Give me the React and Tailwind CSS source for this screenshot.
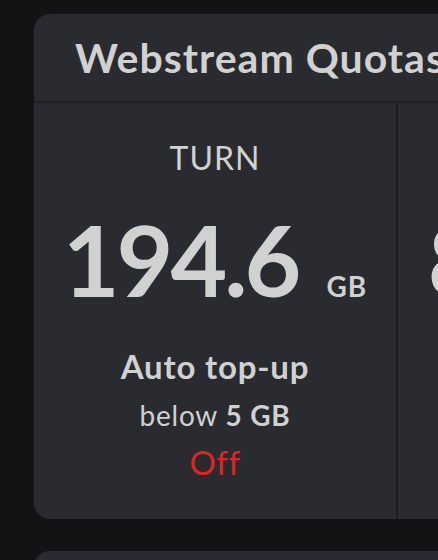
export default function App() {
  const quotas = [
    { label: 'TURN', value: '194.6', unit: 'GB', threshold: '5 GB', auto: false },
    { label: 'STUN', value: '812.4', unit: 'GB', threshold: '5 GB', auto: false },
  ];

  return (
    <div className="min-h-[560px] w-[438px] overflow-hidden bg-[#121315] pl-[34px] pt-[14px] font-['Lato',sans-serif] text-[#d1d1d1]">
      <div className="w-[760px] rounded-2xl bg-[#2a2b30]">
        {/* Header */}
        <div className="flex h-[89px] items-center border-b-2 border-[#1e1f22] pl-[41px]">
          <h1 className="whitespace-nowrap text-[41px] font-bold leading-none tracking-[1px]">Webstream Quotas</h1>
        </div>

        {/* Quota columns */}
        <div className="flex">
          {quotas.map((q, i) => (
            <div
              key={q.label}
              className={
                i === 0
                  ? 'flex h-[416px] w-[364px] flex-col items-center border-r-2 border-[#1e1f22]'
                  : 'flex h-[416px] w-[364px] flex-col items-center'
              }
            >
              <div className="mt-[39px] text-[32px] leading-none tracking-[1px]">{q.label}</div>
              <div className="mt-[36px] flex items-baseline whitespace-nowrap">
                <span className="text-[98px] font-bold leading-none tracking-[-3px]">{q.value}</span>
                <span className="ml-[28px] text-[28px] font-bold leading-none tracking-[1px]">{q.unit}</span>
              </div>
              <div className="mt-[42px] text-[33px] font-bold leading-none tracking-[0.8px]">Auto top-up</div>
              <div className="mt-[18px] text-[28px] leading-none tracking-[0.8px]">
                below <span className="font-bold">{q.threshold}</span>
              </div>
              <div className="mt-[17px] text-[33px] leading-none tracking-[0.5px] text-[#e02424]">
                {q.auto ? 'On' : 'Off'}
              </div>
            </div>
          ))}
        </div>
      </div>
      <div className="mt-[32px] h-[100px] w-[760px] rounded-2xl bg-[#2a2b30]" />
    </div>
  );
}
